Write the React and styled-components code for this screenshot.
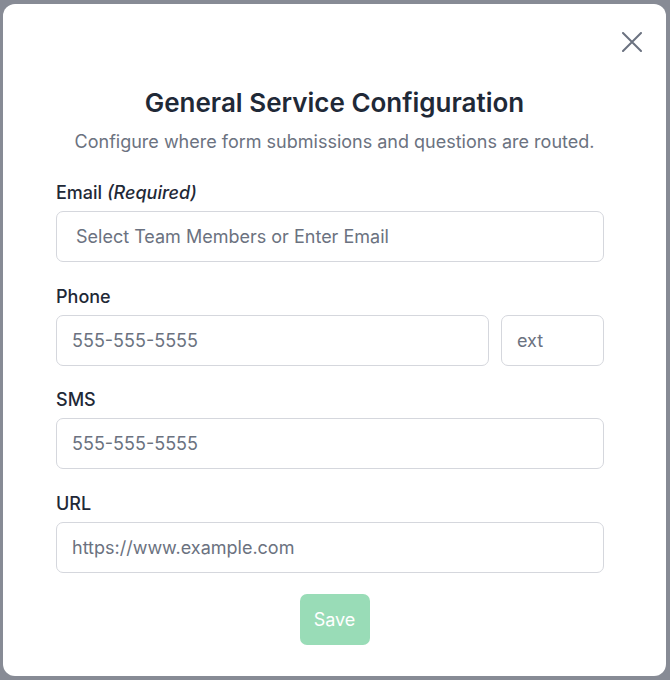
import React, { useState } from "react";
import styled, { createGlobalStyle } from "styled-components";

const GlobalStyle = createGlobalStyle`
  html, body {
    margin: 0;
    padding: 0;
    background: #878b95;
    font-family: Inter, "Noto Sans", "Liberation Sans", sans-serif;
  }
  * { box-sizing: border-box; }
`;

export default function App() {
  const [form, setForm] = useState({ email: "", phone: "", ext: "", sms: "", url: "" });

  const handleChange = (e) => {
    const { name, value } = e.target;
    setForm((prev) => ({ ...prev, [name]: value }));
  };

  return (
    <>
      <GlobalStyle />
      <Modal>
        <CloseButton aria-label="Close">
          <svg width="20" height="20" viewBox="0 0 20 20" fill="none">
            <path d="M1 1L19 19M19 1L1 19" stroke="#6b7280" strokeWidth="2" strokeLinecap="round" />
          </svg>
        </CloseButton>

        <Header>
          <Title>General Service Configuration</Title>
          <Subtitle>Configure where form submissions and questions are routed.</Subtitle>
        </Header>

        <Form>
          <Field>
            <Label>
              Email <em>(Required)</em>
            </Label>
            <Input
              name="email"
              $indent={19}
              placeholder="Select Team Members or Enter Email"
              value={form.email}
              onChange={handleChange}
            />
          </Field>

          <Field>
            <Label>Phone</Label>
            <Row>
              <Input name="phone" placeholder="555-555-5555" value={form.phone} onChange={handleChange} />
              <Input name="ext" $width={103} placeholder="ext" value={form.ext} onChange={handleChange} />
            </Row>
          </Field>

          <Field>
            <Label>SMS</Label>
            <Input name="sms" placeholder="555-555-5555" value={form.sms} onChange={handleChange} />
          </Field>

          <Field>
            <Label>URL</Label>
            <Input name="url" placeholder="https://www.example.com" value={form.url} onChange={handleChange} />
          </Field>

          <SaveButton disabled>Save</SaveButton>
        </Form>
      </Modal>
    </>
  );
}

/* ----------------------------- STYLED COMPONENTS ----------------------------- */

const Modal = styled.div`
  position: relative;
  width: 663px;
  height: 672px;
  margin: 4px 0 0 3px;
  background: #ffffff;
  border-radius: 12px;
  display: flex;
  flex-direction: column;
  padding-top: 82px;
`;

const CloseButton = styled.button`
  position: absolute;
  top: 27px;
  right: 23px;
  width: 22px;
  height: 22px;
  padding: 1px;
  border: none;
  background: none;
  cursor: pointer;
  display: flex;
  align-items: center;
  justify-content: center;
`;

const Header = styled.div`
  display: flex;
  flex-direction: column;
  align-items: center;
  gap: 9px;
`;

const Title = styled.h2`
  margin: 0;
  font-size: 26px;
  line-height: 34px;
  font-weight: 600;
  color: #1f2937;
`;

const Subtitle = styled.p`
  margin: 0;
  font-size: 18px;
  line-height: 26px;
  color: #6b7280;
`;

const Form = styled.div`
  display: flex;
  flex-direction: column;
  gap: 21.5px;
  padding: 25px 62px 0 53px;
`;

const Field = styled.div`
  display: flex;
  flex-direction: column;
  gap: 5px;
`;

const Label = styled.label`
  font-size: 18px;
  line-height: 26px;
  font-weight: 500;
  color: #1f2937;

  em {
    font-style: italic;
  }
`;

const Row = styled.div`
  display: flex;
  gap: 12px;
`;

const Input = styled.input`
  flex: ${(p) => (p.$width ? `0 0 ${p.$width}px` : "1 1 auto")};
  width: ${(p) => (p.$width ? `${p.$width}px` : "100%")};
  min-width: 0;
  height: 51px;
  padding: 0 14px 0 ${(p) => p.$indent || 15}px;
  border: 1px solid #d5d7dd;
  border-radius: 7px;
  background: #ffffff;
  font-family: inherit;
  font-size: 18px;
  color: #1f2937;

  &::placeholder {
    color: #6b7280;
  }

  &:focus {
    outline: none;
    border-color: #16a34a;
  }
`;

const SaveButton = styled.button`
  align-self: center;
  margin-left: 9px;
  width: 70px;
  height: 51px;
  border: none;
  border-radius: 7px;
  background: #99dcb7;
  color: #ffffff;
  font-family: inherit;
  font-size: 18px;
  cursor: pointer;

  &:disabled {
    cursor: not-allowed;
  }
`;
